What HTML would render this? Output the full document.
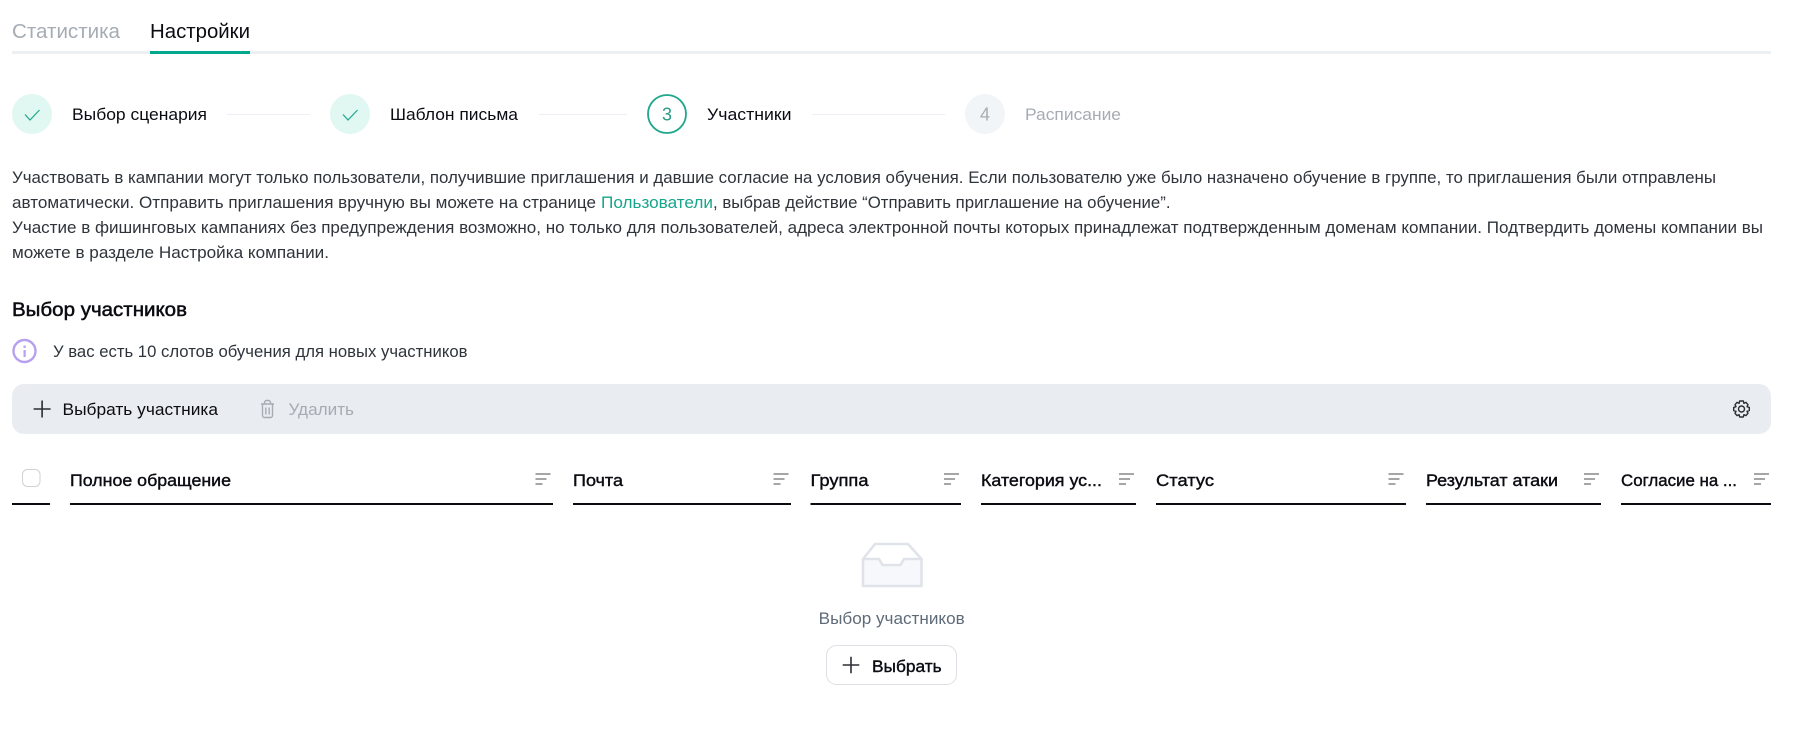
<!DOCTYPE html>
<html lang="ru"><head><meta charset="utf-8"><title>Участники</title>
<style>
html,body{margin:0;padding:0;background:#fff;width:1805px;height:740px;overflow:hidden}
svg{display:block}
text{font-family:"Liberation Sans",sans-serif;font-size:17px;fill:#2f343b;white-space:pre}
.d{fill:#0b0c12}
.m{fill:#0b0c12;stroke:#0b0c12;stroke-width:.4}
.g{fill:#a6acb3}
.ic{fill:none;stroke:#9a9a9a;stroke-width:1.8}
.u{stroke:#0b0c12;stroke-width:2;fill:none}
</style></head><body>
<svg width="1805" height="740" viewBox="0 0 1805 740" xmlns="http://www.w3.org/2000/svg">
<rect x="12" y="51" width="1759" height="3" fill="#edf0f3"/>
<rect x="150" y="51" width="100" height="3" fill="#00a88e"/>
<text x="12" y="38" style="font-size:20px" class="g" textLength="108" lengthAdjust="spacingAndGlyphs">Статистика</text>
<text x="150" y="38" style="font-size:20px" class="d" textLength="100" lengthAdjust="spacingAndGlyphs">Настройки</text>

<circle cx="32" cy="114" r="20" fill="#e0f7f2"/>
<path d="M25 114.500l5 5.500L39.500 110" fill="none" stroke="#1ea68c" stroke-width="1.200"/>
<text x="72" y="120" class="d" textLength="135" lengthAdjust="spacingAndGlyphs">Выбор сценария</text>
<rect x="227" y="114" width="83" height="1" fill="#eeeef8"/>
<circle cx="350" cy="114" r="20" fill="#e0f7f2"/>
<path d="M343 114.500l5 5.500L357.500 110" fill="none" stroke="#1ea68c" stroke-width="1.200"/>
<text x="390" y="120" class="d" textLength="128" lengthAdjust="spacingAndGlyphs">Шаблон письма</text>
<rect x="539" y="114" width="88" height="1" fill="#eeeef8"/>
<circle cx="667" cy="114" r="19" fill="#fff" stroke="#20a68c" stroke-width="1.800"/>
<text x="667" y="120.500" text-anchor="middle" style="font-size:18px;fill:#2a9a86">3</text>
<text x="707" y="120" class="d" textLength="84.500" lengthAdjust="spacingAndGlyphs">Участники</text>
<rect x="812" y="114" width="133" height="1" fill="#eeeef8"/>
<circle cx="985" cy="114" r="20" fill="#f2f5f8"/>
<text x="985" y="120.500" text-anchor="middle" class="g" style="font-size:18px">4</text>
<text x="1025" y="120" class="g" textLength="96" lengthAdjust="spacingAndGlyphs">Расписание</text>

<text x="12" y="183" textLength="1704" lengthAdjust="spacingAndGlyphs">Участвовать в кампании могут только пользователи, получившие приглашения и давшие согласие на условия обучения. Если пользователю уже было назначено обучение в группе, то приглашения были отправлены</text>
<text x="12" y="208" textLength="584" lengthAdjust="spacingAndGlyphs">автоматически. Отправить приглашения вручную вы можете на странице</text>
<text x="601" y="208" style="fill:#17a58c" textLength="112" lengthAdjust="spacingAndGlyphs">Пользователи</text>
<text x="713" y="208" textLength="457.500" lengthAdjust="spacingAndGlyphs">, выбрав действие “Отправить приглашение на обучение”.</text>
<text x="12" y="233" textLength="1751" lengthAdjust="spacingAndGlyphs">Участие в фишинговых кампаниях без предупреждения возможно, но только для пользователей, адреса электронной почты которых принадлежат подтвержденным доменам компании. Подтвердить домены компании вы</text>
<text x="12" y="258" textLength="317" lengthAdjust="spacingAndGlyphs">можете в разделе Настройка компании.</text>

<text x="12" y="316" class="m" style="font-size:19px;stroke-width:.5" textLength="175" lengthAdjust="spacingAndGlyphs">Выбор участников</text>
<circle cx="24.500" cy="351" r="11" fill="none" stroke="#b7a0ee" stroke-width="2.400"/>
<rect x="23.500" y="350" width="2.200" height="7" fill="#b7a0ee"/><rect x="23.500" y="345.500" width="2.200" height="2.400" fill="#b7a0ee"/>
<text x="53" y="357" textLength="414.500" lengthAdjust="spacingAndGlyphs">У вас есть 10 слотов обучения для новых участников</text>

<rect x="12" y="384" width="1759" height="50" rx="12" fill="#e9ecf1"/>
<path d="M33.600 409h17M42.100 400.500v17" stroke="#2b2e35" stroke-width="1.600" fill="none"/>
<text x="62.500" y="415" class="d" textLength="155.500" lengthAdjust="spacingAndGlyphs">Выбрать участника</text>
<path d="M261 404h13M264.500 404v-1.500a2 2 0 0 1 2-2h2a2 2 0 0 1 2 2v1.500M262.500 404v11.500a2 2 0 0 0 2 2h6a2 2 0 0 0 2-2V404M265.800 407.500v7M269.200 407.500v7" fill="none" stroke="#a6acb3" stroke-width="1.400"/>
<text x="288.500" y="415" class="g" textLength="65.500" lengthAdjust="spacingAndGlyphs">Удалить</text>
<g transform="translate(1741.500 409)" fill="none" stroke="#2b2e35" stroke-width="1.400">
<circle r="3"/>
<path d="M-1.800-8h3.600l.6 2.300 2-.9 2.100 2.300-1 2 2.300.7v3.200l-2.300.7 1 2-2.100 2.300-2-.9-.6 2.300h-3.600l-.6-2.300-2 .9-2.100-2.300 1-2-2.300-.7v-3.200l2.300-.7-1-2 2.100-2.300 2 .9z" stroke-linejoin="round"/>
</g>

<rect x="22.500" y="469.500" width="17.500" height="17" rx="5" fill="#fff" stroke="#cfd2d6" stroke-width="1"/>
<path class="u" d="M12 504h38M70 504h483M573 504h218M810.500 504h150.500M981 504h155M1156 504h250M1426 504h175M1621 504h150"/>
<text x="70" y="486" class="m" textLength="161" lengthAdjust="spacingAndGlyphs">Полное обращение</text>
<text x="573" y="486" class="m" textLength="50" lengthAdjust="spacingAndGlyphs">Почта</text>
<text x="810.500" y="486" class="m" textLength="58" lengthAdjust="spacingAndGlyphs">Группа</text>
<text x="981" y="486" class="m" textLength="121" lengthAdjust="spacingAndGlyphs">Категория ус...</text>
<text x="1156" y="486" class="m" textLength="58" lengthAdjust="spacingAndGlyphs">Статус</text>
<text x="1426" y="486" class="m" textLength="132" lengthAdjust="spacingAndGlyphs">Результат атаки</text>
<text x="1621" y="486" class="m" textLength="116" lengthAdjust="spacingAndGlyphs">Согласие на ...</text>
<g class="ic">
<path d="M535.500 474h15M535.500 479h11M535.500 484h7"/>
<path d="M773.500 474h15M773.500 479h11M773.500 484h7"/>
<path d="M944 474h15M944 479h11M944 484h7"/>
<path d="M1119 474h15M1119 479h11M1119 484h7"/>
<path d="M1388.500 474h15M1388.500 479h11M1388.500 484h7"/>
<path d="M1584 474h15M1584 479h11M1584 484h7"/>
<path d="M1754 474h15M1754 479h11M1754 484h7"/>
</g>

<path d="M863 559h16l3.500 6h18l3.500-6h17v27h-58z" fill="#f7f8fb"/>
<path d="M875 544h33l13.500 15v27h-58.500v-27zM863 559h16l3.500 6h18l3.500-6h16.500" fill="none" stroke="#e0e3e9" stroke-width="2.600" stroke-linejoin="round"/>
<text x="818.700" y="624" style="fill:#5f6b78" textLength="146" lengthAdjust="spacingAndGlyphs">Выбор участников</text>
<rect x="826.500" y="645.500" width="130" height="39" rx="10" fill="#fff" stroke="#dcdfe4" stroke-width="1"/>
<path d="M842.700 665h16.600M851 656.700v16.600" stroke="#2b2e35" stroke-width="1.600" fill="none"/>
<text x="872" y="672" class="m" textLength="69.700" lengthAdjust="spacingAndGlyphs">Выбрать</text>
</svg>
</body></html>
